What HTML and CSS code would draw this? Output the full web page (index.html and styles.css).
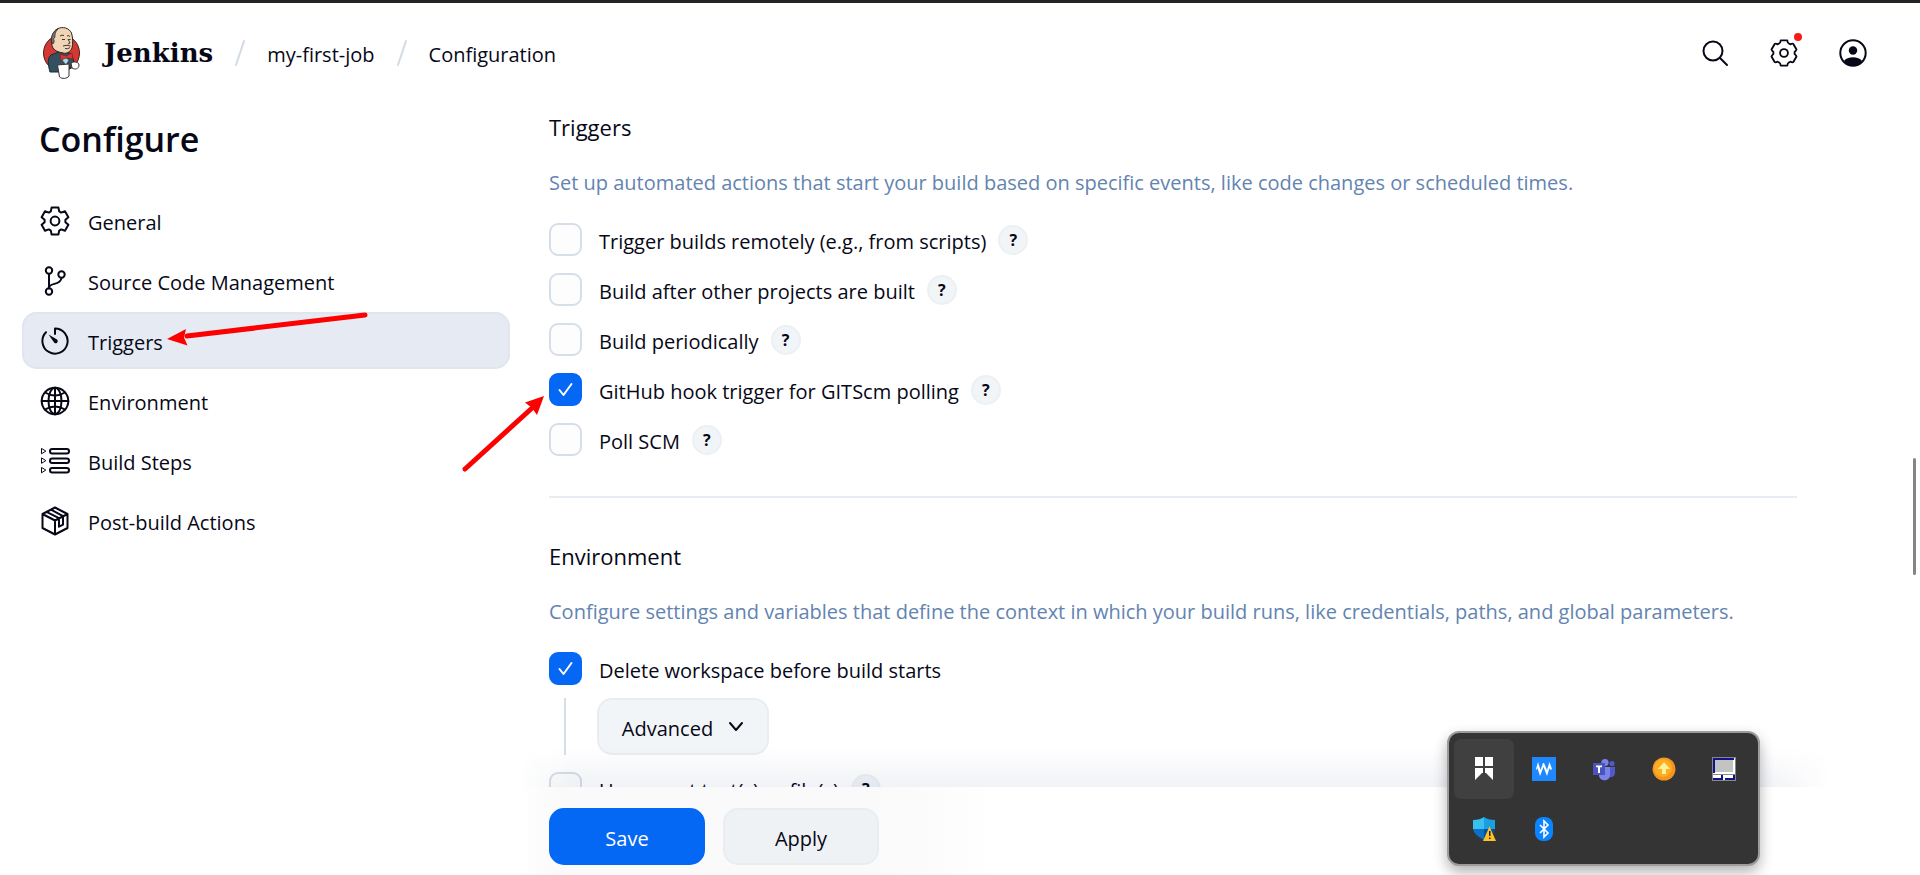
FILE: index.html
```html
<!DOCTYPE html>
<html lang="en">
<head>
<meta charset="utf-8">
<title>my-first-job Config - Jenkins</title>
<link rel="stylesheet" href="styles.css">
</head>
<body>
<svg class="sprite" aria-hidden="true">
  <symbol id="gear" viewBox="0 0 30 30"><path d="M11.600 1.500H18.400L19.200 5.400 21.200 6.600 25 5.300 28.400 11.200 25.400 13.800V16.200L28.400 18.800 25 24.700 21.200 23.400 19.200 24.600 18.400 28.500H11.600L10.800 24.600 8.800 23.400 5 24.700 1.600 18.800 4.600 16.200V13.800L1.600 11.200 5 5.300 8.800 6.600 10.800 5.400z"/><circle cx="15" cy="15" r="4.400"/></symbol>
  <symbol id="cog" viewBox="0 0 30 30"><path d="M11.500 1.500H18.500Q19 4.300 19.800 4.500L21.800 5.700Q24 4.600 25 5.300L28.400 11.200Q28.200 12.400 26.400 13.800V16.200Q28.200 17.600 28.400 18.800L25 24.700Q24 25.400 21.800 24.300L19.800 25.500Q19 25.700 18.500 28.500H11.500Q11 25.700 10.200 25.500L8.200 24.300Q6 25.400 5 24.700L1.600 18.800Q1.800 17.600 3.600 16.200V13.800Q1.800 12.400 1.600 11.200L5 5.300Q6 4.600 8.200 5.700L10.200 4.500Q11 4.300 11.500 1.500z"/><circle cx="15" cy="15" r="4.200"/></symbol>
  <symbol id="check" viewBox="0 0 33 33"><path d="M10.500 17l4 5 8-11"/></symbol>
</svg>
<div class="app">
  <header class="header">
    <nav class="crumbs" aria-label="Breadcrumb">
      <a class="brand" href="#">
        <svg class="logo" viewBox="0 0 37 52" aria-hidden="true">
          <ellipse cx="18.500" cy="26" rx="18" ry="18" fill="#d33833" stroke="#4a1f1f"/>
          <path d="M7 45C5 38 4 31 8 28l8-3 11 1c3 3 4 8 4 13l-5 2-3 4z" fill="#335061" stroke="#1d2b33"/>
          <path d="M10 21C7 16 8 6 14 2c6-3 12-1 14.500 4C30 11 30 17 29 21c-2 4-5 6-9 5-5-1-8-2-10-5z" fill="#f0d6b7" stroke="#2b2320"/>
          <path d="M9.500 17C7 12 9 4 15 2c-3 3-3 5-3 8l-1.500 2c1 2 1 3-.5 5z" fill="#777577" stroke="#2b2320" stroke-width=".7"/>
          <path d="M17 9q2-1.500 4-.5M24 9q2-1 3 .5M19 12.500h3M25.500 12.500h2M25 12l2 4-2 1M20 19q4-1.500 7.500 0M22 21.500q3 1 5-1" fill="none" stroke="#2b2320" stroke-width=".9"/>
          <path d="M17 27l6 2 6-3 1 6-6-1-6 3z" fill="#d33833" stroke="#8b1c1c" stroke-width=".7"/>
          <path d="M19 33l4 5 3-5-3-2z" fill="#b6d5e5" stroke="#24404f" stroke-width=".6"/>
          <path d="M14.500 38l11.500-1v12c-2 3-7 3-9.500 1z" fill="#fff" stroke="#333"/>
          <path d="M28 36c3-2 8-1 8 2 0 4-4 5-7 3z" fill="#fff" stroke="#333"/>
        </svg>
        <span class="brand-name">Jenkins</span>
      </a>
      <svg class="slash" viewBox="0 0 12 28" aria-hidden="true"><path d="M10 2L2 26"/></svg>
      <a class="crumb" href="#">my-first-job</a>
      <svg class="slash" viewBox="0 0 12 28" aria-hidden="true"><path d="M10 2L2 26"/></svg>
      <a class="crumb" href="#">Configuration</a>
    </nav>
    <div class="actions">
      <button class="icon-button" type="button" aria-label="Search"><svg class="icon" viewBox="0 0 28 28"><circle cx="12" cy="12" r="9.500"/><path d="M19 19l7 7"/></svg></button>
      <button class="icon-button" type="button" aria-label="Manage Jenkins"><svg class="icon"><use href="#cog"/></svg><span class="dot"></span></button>
      <button class="icon-button" type="button" aria-label="Account"><svg class="icon" viewBox="0 0 28 28"><circle cx="14" cy="14" r="12.700"/><circle cx="14" cy="11.500" r="4.200" class="solid"/><path class="solid" d="M5 22c3-5 15-5 18 0-4 6-14 6-18 0z"/></svg></button>
    </div>
  </header>

  <div class="body">
    <aside class="sidebar">
      <h1 class="title">Configure</h1>
      <nav class="menu">
        <a class="item" href="#"><svg class="icon"><use href="#gear"/></svg><span class="text">General</span></a>
        <a class="item" href="#"><svg class="icon" viewBox="0 0 30 30"><circle cx="9" cy="4.500" r="3.200"/><circle cx="9" cy="25.500" r="3.200"/><circle cx="21.500" cy="8.500" r="3.200"/><path d="M9 8v14.500M21.500 12c-1 8-12.500 4-12.500 10"/></svg><span class="text">Source Code Management</span></a>
        <a class="item selected" href="#" aria-current="true"><svg class="icon" viewBox="0 0 30 30"><path d="M6 6.200A12.600 12.600 0 1 0 15 2.400V8"/><path class="solid" d="M8.500 8.500l8.500 5a2 2 0 0 1-2.700 3.200z"/></svg><span class="text">Triggers</span></a>
        <a class="item" href="#"><svg class="icon" viewBox="0 0 30 30"><circle cx="15" cy="15" r="13.300"/><ellipse cx="15" cy="15" rx="6.500" ry="13.300"/><path d="M15 1.700v26.600M1.700 15h26.600M5 6.500q10 6 20 0M5 23.500q10-6 20 0"/></svg><span class="text">Environment</span></a>
        <a class="item" href="#"><svg class="icon" viewBox="0 0 30 30"><rect x="10" y="3" width="19" height="4.500" rx="2.200"/><rect x="10" y="12.500" width="19" height="4.500" rx="2.200"/><rect x="10" y="22" width="19" height="4.500" rx="2.200"/><path class="thin" d="M1.500 2.800v5l4-2.500zM1.500 12.300v5l4-2.500zM1.500 21.800v5l4-2.500z"/></svg><span class="text">Build Steps</span></a>
        <a class="item" href="#"><svg class="icon" viewBox="0 0 30 30"><path d="M15 1.500L27.500 8v14L15 28.500 2.500 22V8zM2.500 8L15 14.500 27.500 8M15 14.500v14M11 3.600l12 6.600v8.500l-4 2v-8.500L6.500 5.900"/></svg><span class="text">Post-build Actions</span></a>
      </nav>
    </aside>

    <main class="content">
      <section class="section">
        <h2 class="heading">Triggers</h2>
        <p class="description">Set up automated actions that start your build based on specific events, like code changes or scheduled times.</p>
        <div class="options">
          <div class="option"><label class="choice"><span class="box"><input type="checkbox"><svg class="tick"><use href="#check"/></svg></span><span class="text">Trigger builds remotely (e.g., from scripts)</span></label><button class="help" type="button">?</button></div>
          <div class="option"><label class="choice"><span class="box"><input type="checkbox"><svg class="tick"><use href="#check"/></svg></span><span class="text">Build after other projects are built</span></label><button class="help" type="button">?</button></div>
          <div class="option"><label class="choice"><span class="box"><input type="checkbox"><svg class="tick"><use href="#check"/></svg></span><span class="text">Build periodically</span></label><button class="help" type="button">?</button></div>
          <div class="option"><label class="choice"><span class="box"><input type="checkbox" checked><svg class="tick"><use href="#check"/></svg></span><span class="text">GitHub hook trigger for GITScm polling</span></label><button class="help" type="button">?</button></div>
          <div class="option"><label class="choice"><span class="box"><input type="checkbox"><svg class="tick"><use href="#check"/></svg></span><span class="text">Poll SCM</span></label><button class="help" type="button">?</button></div>
        </div>
      </section>
      <section class="section">
        <h2 class="heading">Environment</h2>
        <p class="description">Configure settings and variables that define the context in which your build runs, like credentials, paths, and global parameters.</p>
        <div class="options">
          <div class="option"><label class="choice"><span class="box"><input type="checkbox" checked><svg class="tick"><use href="#check"/></svg></span><span class="text">Delete workspace before build starts</span></label></div>
          <div class="nested"><button class="button advanced" type="button"><span class="text">Advanced</span><svg class="chevron" viewBox="0 0 16 12" aria-hidden="true"><path d="M2 2l6 7 6-7"/></svg></button></div>
          <div class="option"><label class="choice"><span class="box"><input type="checkbox"><svg class="tick"><use href="#check"/></svg></span><span class="text">Use secret text(s) or file(s)</span></label><button class="help" type="button">?</button></div>
        </div>
      </section>
    </main>
  </div>

  <footer class="footer">
    <button class="button primary" type="submit"><span class="text">Save</span></button>
    <button class="button" type="button"><span class="text">Apply</span></button>
  </footer>
</div>

<div class="scroll-thumb"></div>

<svg class="arrow arrow-menu" viewBox="0 0 204 36" aria-hidden="true"><path class="shaft" d="M198 6L20 27"/><path class="head" d="M0 30L19 20l-2 8.500 3.500 8z"/></svg>
<svg class="arrow arrow-box" viewBox="0 0 84 78" aria-hidden="true"><path class="shaft" d="M4 74L70 14"/><path class="head" d="M83 1L64 7.500l7 5.500 5 7z"/></svg>

<div class="tray">
  <span class="cell active"><svg viewBox="0 0 24 24"><path fill="#fff" d="M3 0h8v9H3zM13 0h8v9h-8zM3 11h18v12l-7-7h-4l-7 7z"/><path fill="#404040" d="M11 11h2v6h-2z"/></svg></span>
  <span class="cell"><svg viewBox="0 0 24 24"><path fill="#1e88ff" d="M0 0h24v24H0z"/><path fill="#fff" d="M4 12l2-7 2.500 8L11 6h1l3 7 2.500-8L20 12l-1.500 1-1-2-2.500 8-3.500-9L8 19l-2.500-8L4.500 13z"/></svg></span>
  <span class="cell"><svg viewBox="0 0 24 24"><circle cx="20" cy="6.500" r="2.600" fill="#5059c9"/><path fill="#5059c9" d="M16 10h7v6c0 3-3 5-6 4z"/><circle cx="13" cy="5.500" r="3.600" fill="#7b83eb"/><path fill="#7b83eb" d="M7 10h11v8c0 7-11 7-11 0z"/><path fill="#4b53bc" d="M1 6h12v12H1z"/><path fill="#fff" d="M4 8.500h6v1.800H8V16H6v-5.700H4z"/></svg></span>
  <span class="cell"><svg viewBox="0 0 24 24"><circle cx="12" cy="12" r="11.500" fill="#f7941d"/><circle cx="11" cy="11" r="9" fill="#fdae22"/><path fill="#fff19a" d="M12 5l6 7h-4v5h-4v-5H6z"/></svg></span>
  <span class="cell"><svg viewBox="0 0 24 24"><path fill="#888" d="M0 0h24v24H0z"/><path fill="#fff" d="M1 1h22v16H1zM1 18h22v5H1z"/><path fill="#12128a" d="M1 1h21v2H3v13H1zM1 21h10v2H1zM13 21h10v2H13zM9 18h2v3H9zM21 18h2v3h-2z"/><path fill="#c3c3c3" d="M3 3h18v12H3z"/></svg></span>
  <span class="cell"><svg viewBox="0 0 24 24"><path fill="#38c0ee" d="M1 3q7 0 11-3v12H1z"/><path fill="#1a9fe0" d="M12 0q4 3 11 3v9H12z"/><path fill="#0b70c8" d="M1 12h11v11Q2 18 1 12z"/><path fill="#07509c" d="M12 12h11q-1 6-11 11z"/><path fill="#ffc225" d="M17.500 9.500L24 24H11z"/><path fill="#222" d="M17 14h1.500v5H17zM17 20.500h1.500V22H17z"/></svg></span>
  <span class="cell"><svg viewBox="0 0 24 24"><rect x="3" width="18" height="24" rx="8" fill="#0a84ff"/><path fill="none" stroke="#fff" stroke-width="1.600" d="M8 8l8 8-4 4V4l4 4-8 8"/></svg></span>
</div>
</body>
</html>
```
FILE: styles.css
```css
* { box-sizing: border-box; }

body {
  margin: 0;
  background: #fff;
  color: #070817;
  font: 20px/28px "Open Sans", "Noto Sans", sans-serif;
  overflow: hidden;
}

a { color: inherit; text-decoration: none; }
button { font: inherit; color: inherit; cursor: pointer; }
.sprite { display: none; }
.text { padding-top: 4px; }

.app {
  display: flex;
  flex-direction: column;
  height: 100vh;
  border-top: 3px solid #242328;
}

.header {
  display: flex;
  justify-content: space-between;
  align-items: center;
  flex: none;
  height: 100px;
  padding: 0 49px 0 43px;
}
.crumbs { display: flex; align-items: center; gap: 21px; }
.brand { display: flex; align-items: center; gap: 24px; }
.brand-name { font: bold 26px/32px "DejaVu Serif", serif; }
.logo { width: 37px; height: 52px; }
.slash { width: 12px; height: 28px; fill: none; stroke: #d1dbe6; stroke-width: 2; stroke-linecap: round; }
.crumb { padding-top: 3px; }

.actions { display: flex; gap: 33px; }
.icon-button {
  position: relative;
  display: grid;
  place-items: center;
  width: 36px;
  height: 36px;
  padding: 0;
  border: 0;
  background: none;
}
.icon { flex: none; width: 30px; height: 30px; fill: none; stroke: currentColor; stroke-width: 2; stroke-linejoin: round; stroke-linecap: round; }
.icon-button .icon { width: 28px; height: 28px; }
.solid { fill: currentColor; stroke: none; }
.thin { stroke-width: 1; }
.dot { position: absolute; top: -2px; right: 0; width: 8px; height: 8px; border-radius: 50%; background: #fb1818; }

.body { display: flex; flex: 1; min-height: 0; overflow: hidden; }

.sidebar { flex: none; width: 549px; padding: 12px 39px 0 22px; }
.title { margin: 0 0 29px; padding-left: 17px; font-size: 34px; line-height: 48px; font-weight: 600; }
.menu { display: flex; flex-direction: column; gap: 3px; }
.item { display: flex; align-items: center; gap: 18px; height: 57px; padding: 0 18px; border-radius: 15px; }
.item.selected { background: #e6ebf3; box-shadow: inset 0 0 0 2px #e1e6ee; }

.content { flex: 1; min-width: 0; padding: 8px 123px 0 0; }
.heading { margin: 0 0 25px; font-size: 22px; line-height: 32px; font-weight: 400; }
.description { margin: 0 0 25px; color: #6384b0; line-height: 30px; white-space: nowrap; }
.section + .section { margin-top: 40px; padding-top: 42px; border-top: 2px solid #e7ecf3; }
.options { display: flex; flex-direction: column; gap: 17px; }
.option, .choice { display: flex; align-items: center; height: 33px; }
.option { gap: 12px; }
.choice { gap: 17px; }
.box { display: grid; width: 33px; height: 33px; }
.box > * { grid-area: 1 / 1; }
.box input {
  appearance: none;
  width: 33px;
  height: 33px;
  margin: 0;
  border: 2px solid #d6dfe9;
  border-radius: 9px;
  background: #fdfdfd;
}
.box input:checked { border-color: #0468f5; background: #0468f5; }
.tick { display: none; width: 33px; height: 33px; fill: none; stroke: #fff; stroke-width: 2; stroke-linecap: round; stroke-linejoin: round; pointer-events: none; }
.box input:checked + .tick { display: block; }
.help {
  width: 30px;
  height: 30px;
  padding: 0;
  border: 2px solid #ecf0f4;
  border-radius: 50%;
  background: #f1f5f8;
  font-size: 16px;
  line-height: 24px;
  font-weight: 700;
}

.nested { margin: -4px 0 0 15px; padding-left: 31px; border-left: 2px solid #d6dfe9; }
.button {
  display: flex;
  align-items: center;
  justify-content: center;
  width: 156px;
  height: 57px;
  padding: 0;
  border: 2px solid #e9edf1;
  border-radius: 15px;
  background: #eef2f5;
}
.primary { border-color: #0468f5; background: #0468f5; color: #fff; }
.advanced { width: 172px; gap: 15px; background: #f2f5f8; }
.chevron { width: 16px; height: 12px; fill: none; stroke: currentColor; stroke-width: 2; stroke-linecap: round; stroke-linejoin: round; }

.footer {
  position: relative;
  display: flex;
  flex: none;
  gap: 18px;
  height: 88px;
  padding: 21px 0 0 549px;
  background: linear-gradient(90deg, #fff 520px, #fafafb 560px, #fafafb 880px, #fff 1000px);
}
.footer::before {
  content: "";
  position: absolute;
  right: 90px;
  bottom: 100%;
  left: 520px;
  height: 40px;
  background: linear-gradient(rgb(20 40 100 / 0), rgb(20 40 100 / 6%));
  mask-image: linear-gradient(90deg, transparent, #000 50px, #000 calc(100% - 60px), transparent);
}

.scroll-thumb { position: absolute; top: 458px; right: 4px; width: 3px; height: 117px; border-radius: 2px; background: #858585; }

.arrow { position: absolute; pointer-events: none; }
.arrow-menu { top: 309px; left: 167px; width: 204px; height: 36px; overflow: visible; }
.arrow-box { top: 395px; left: 461px; width: 84px; height: 78px; }
.shaft { fill: none; stroke: #fd0100; stroke-width: 5; stroke-linecap: round; }
.head { fill: #fd0100; }

.tray {
  position: absolute;
  right: 160px;
  bottom: 9px;
  display: grid;
  grid-template-columns: repeat(5, 60px);
  grid-auto-rows: 60px;
  width: 313px;
  height: 135px;
  padding: 6px 5px;
  border: 2px solid #9c9c9c;
  border-radius: 12px;
  background: #343434;
  box-shadow: 0 6px 14px rgb(0 0 0 / 30%);
}
.cell { display: grid; place-items: center; border-radius: 7px; }
.cell svg { width: 24px; height: 24px; }
.cell.active { background: #404040; }
```
